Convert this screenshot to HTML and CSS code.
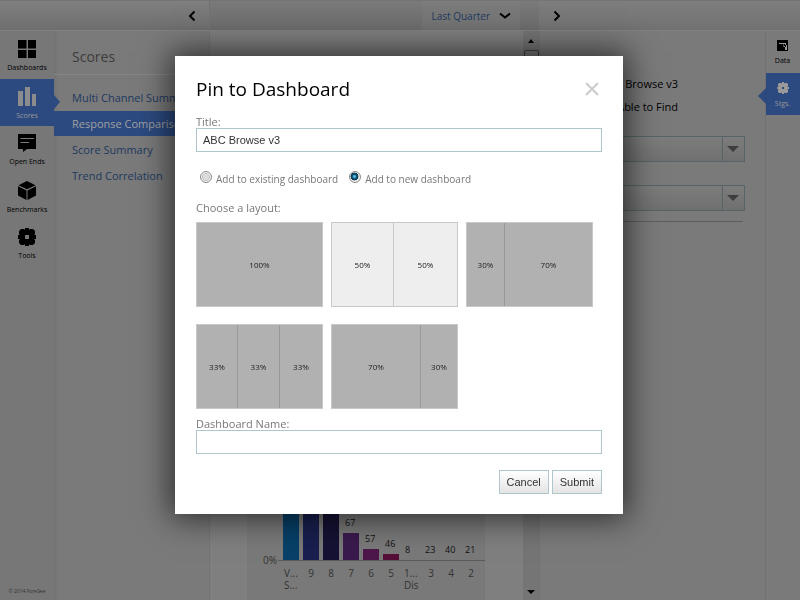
FILE: index.html
```html
<!DOCTYPE html>
<html lang="en">
<head>
<meta charset="utf-8">
<title>Pin to Dashboard</title>
<link rel="stylesheet" href="styles.css">
</head>
<body>
<div class="app">
  <header class="topbar">
    <div class="topbar-nav"><button class="icon-button" aria-label="Collapse navigation"><svg width="8" height="12" viewBox="0 0 8 12"><path d="M6.5 1.5 2 6l4.500 4.500" fill="none" stroke="#000" stroke-width="2"/></svg></button></div>
    <div class="topbar-main"><button class="period">Last Quarter <svg width="12" height="8" viewBox="0 0 12 8"><path d="M1 1.500 6 5.500l5-4" fill="none" stroke="#000" stroke-width="2"/></svg></button></div>
    <div class="topbar-settings"><button class="icon-button" aria-label="Collapse settings"><svg width="8" height="12" viewBox="0 0 8 12"><path d="M1.500 1.500 6 6l-4.500 4.500" fill="none" stroke="#000" stroke-width="2"/></svg></button></div>
  </header>
  <nav class="rail">
    <a class="rail-item" href="#"><svg width="18" height="18" viewBox="0 0 18 18"><path d="M0 0h8.500v8.500H0zM10 0h8v8.500h-8zM0 10h8.500v8H0zM10 10h8v8h-8z"/></svg>Dashboards</a>
    <a class="rail-item active" href="#"><svg width="18" height="19" viewBox="0 0 18 19"><path d="M0 4h5v15H0zM7 0h5v19H7zM14 7h4v12h-4z"/></svg>Scores</a>
    <a class="rail-item" href="#"><svg width="18" height="18" viewBox="0 0 18 18"><path d="M0 0h18v15H9l-4 3v-3H0z"/><path d="M2.500 4.500H16M2.500 8.500H11" stroke="#7a7a7a" stroke-width="1"/></svg>Open Ends</a>
    <a class="rail-item" href="#"><svg width="18" height="19" viewBox="0 0 18 19"><path d="M9 0l8.500 4.200L9 8.300.500 4.200zM0 5.200l8.500 4.200V19L0 14.500zM18 5.200 9.500 9.400V19l8.500-4.500z"/></svg>Benchmarks</a>
    <a class="rail-item" href="#"><svg width="18" height="18" viewBox="0 0 18 18"><path fill-rule="evenodd" d="M3 1h3l1 1V0h4v2l1-1h3l2 2v3l-1 1h2v4h-2l1 1v3l-2 2h-3l-1-1v2H7v-2l-1 1H3l-2-2v-3l1-1H0V7h2L1 6V3zM7 7v4h4V7z"/></svg>Tools</a>
    <small class="copyright">© 2014 ForeSee</small>
  </nav>
  <section class="submenu">
    <h2>Scores</h2>
    <ul>
      <li><a href="#">Multi Channel Summary</a></li>
      <li class="active"><a href="#">Response Comparison</a></li>
      <li><a href="#">Score Summary</a></li>
      <li><a href="#">Trend Correlation</a></li>
    </ul>
  </section>
  <main class="report">
    <div class="chart">
      <div class="zero">0%</div>
      <div class="plot">
        <div class="bars">
          <div class="column"><i class="bar" style="height:120px;background:#074068"></i></div>
          <div class="column"><i class="bar" style="height:110px;background:#191f4e"></i></div>
          <div class="column"><i class="bar" style="height:90px;background:#151233"></i></div>
          <div class="column">67<i class="bar" style="height:27px;background:#3a1a4e"></i></div>
          <div class="column">57<i class="bar" style="height:11px;background:#4e174c"></i></div>
          <div class="column">46<i class="bar" style="height:6px;background:#560f38"></i></div>
          <div class="column">8</div>
          <div class="column">23</div>
          <div class="column">40</div>
          <div class="column">21</div>
        </div>
        <div class="ticks">
          <span class="pair"><b>V...</b><b>S...</b></span><span>9</span><span>8</span><span>7</span><span>6</span><span>5</span><span class="pair"><b>1...</b><b>Dis</b></span><span>3</span><span>4</span><span>2</span>
        </div>
      </div>
    </div>
    <div class="scrollbar">
      <svg width="6" height="4" viewBox="0 0 6 4"><path d="M3 0l3 4H0z"/></svg>
      <span class="thumb"></span>
      <svg width="8" height="4" viewBox="0 0 8 4"><path d="M4 4 0 0h8z"/></svg>
    </div>
  </main>
  <section class="settings">
    <p>ABC Browse v3</p>
    <p>Able to Find</p>
    <div class="picker"><select aria-label="Measure"><option></option></select></div>
    <div class="picker"><select aria-label="Segment"><option></option></select></div>
    <hr>
  </section>
  <nav class="tools">
    <a class="tool" href="#"><svg width="11" height="11" viewBox="0 0 11 11"><path d="M0 0h11v11H0z"/><path d="M2 3h7v2H8V4H6.500v3H9V5h1v5H8V6H6V4H2z" fill="#999"/></svg>Data</a>
    <a class="tool active" href="#"><svg width="12" height="12" viewBox="0 0 12 12"><path fill-rule="evenodd" d="M2 1h2l1 .500V0h2v1.500L8 1h2l1 1v2l-.500 1H12v2h-1.500l.500 1v2l-1 1H8l-1-.500V12H5v-1.500L4 11H2l-1-1V8l.500-1H0V5h1.500L1 4V2zM5 5v2h2V5z"/></svg>Stgs.</a>
  </nav>
</div>
<div class="overlay">
  <form class="dialog" role="dialog" aria-labelledby="dialog-title">
    <header class="dialog-head">
      <h1 id="dialog-title">Pin to Dashboard</h1>
      <button type="button" class="close" aria-label="Close"><svg width="14" height="14" viewBox="0 0 14 14"><path d="M1 1l12 12M13 1 1 13" stroke="#ccc" stroke-width="2"/></svg></button>
    </header>
    <label class="field">Title:<input type="text" value="ABC Browse v3"></label>
    <div class="choices">
      <label><input type="radio" name="target">Add to existing dashboard</label>
      <label><input type="radio" name="target" checked>Add to new dashboard</label>
    </div>
    <p class="prompt">Choose a layout:</p>
    <div class="layouts">
      <button type="button" class="layout whole"><span>100%</span></button>
      <button type="button" class="layout halves selected"><span>50%</span><span>50%</span></button>
      <button type="button" class="layout narrow-wide"><span>30%</span><span>70%</span></button>
      <button type="button" class="layout thirds"><span>33%</span><span>33%</span><span>33%</span></button>
      <button type="button" class="layout wide-narrow"><span>70%</span><span>30%</span></button>
    </div>
    <label class="field">Dashboard Name:<input type="text"></label>
    <footer class="actions"><button type="button">Cancel</button><button type="submit">Submit</button></footer>
  </form>
</div>
</body>
</html>
```
FILE: styles.css
```css
* { box-sizing: border-box; }
body {
  margin: 0;
  overflow: hidden;
  font: 11px/12px "Open Sans", sans-serif;
  color: #777;
}
button { font: inherit; padding: 0; border: 0; background: none; }
a { color: inherit; text-decoration: none; }
h1, h2, p, ul { margin: 0; padding: 0; font-weight: 400; }
svg { display: block; }

.app {
  display: grid;
  grid-template-columns: 54px 156px 1fr 226px 35px;
  grid-template-rows: 31px 1fr;
  height: 100vh;
  background: #7a7a7a;
}

.topbar {
  grid-column: 1 / -1;
  display: grid;
  grid-template-columns: 210px 1fr 261px;
  border-top: 1px solid #747474;
  border-bottom: 1px solid #828282;
  background: linear-gradient(#7a7a7a, #6b6b6b);
}
.topbar > div { display: flex; align-items: center; }
.topbar-nav { justify-content: flex-end; padding-right: 13px; border-right: 1px solid #727272; background: linear-gradient(#7f7f7f, #6e6e6e); }
.topbar-main { justify-content: flex-end; padding-right: 19px; }
.topbar-settings { padding-left: 14px; background: linear-gradient(#7e7e7e, #717171); }
.period {
  display: flex;
  align-items: center;
  gap: 9px;
  height: 100%;
  padding: 0 9px;
  background: linear-gradient(#7d7d7d, #707070);
  font-size: 10px;
  color: #21395f;
}

.rail { display: flex; flex-direction: column; padding-top: 1px; background: #777; }
.rail-item {
  position: relative;
  display: flex;
  flex-direction: column;
  align-items: center;
  gap: 5px;
  height: 47px;
  padding-top: 8px;
  font-size: 7px;
  line-height: 10px;
  color: #000;
}
.rail-item.active { background: #2c4a80; color: #999; fill: #8c8c8c; }
.rail-item.active::after {
  content: "";
  position: absolute;
  top: 16px;
  left: 54px;
  border: 7px solid transparent;
  border-left: 6px solid #2c4a80;
  border-right: 0;
}
.copyright { margin: auto 0 3px; text-align: center; font-size: 5px; color: #333; }

.submenu { overflow: hidden; border-right: 1px solid #747474; background: linear-gradient(90deg, #727272, #7a7a7a 4px); }
.submenu h2 {
  height: 44px;
  padding-left: 18px;
  border-bottom: 1px solid #868686;
  font-size: 14px;
  line-height: 52px;
  color: #3c3c3c;
}
.submenu ul { display: grid; gap: 1px; padding-top: 10px; list-style: none; }
.submenu li { height: 25px; padding-left: 18px; line-height: 25px; white-space: nowrap; color: #21395f; }
.submenu .active { background: #2c4a80; color: #a0a0a0; }

.report { display: flex; align-items: flex-end; min-width: 0; background: #7f7f7f; }
.chart {
  display: flex;
  flex: 1;
  align-self: stretch;
  align-items: flex-end;
  margin: 80px 38px 0 37px;
  background: #797979;
  font-size: 10px;
  line-height: 10px;
}
.zero { width: 31px; padding: 0 1px 35px 0; text-align: right; color: #333; }
.plot { flex: 1; }
.bars { display: flex; align-items: flex-end; gap: 4px; padding-left: 5px; border-bottom: 1px solid #5c5c5c; }
.column { width: 16px; padding-left: 2px; padding-bottom: 5px; font-size: 9px; color: #111; }
.column:has(.bar) { padding-bottom: 0; }
.bar { display: block; margin: 5px 0 0 -2px; }
.ticks { display: flex; gap: 4px; height: 39px; padding: 7px 0 0 5px; color: #333; }
.ticks span { width: 16px; text-align: center; }
.ticks .pair { display: grid; align-content: start; gap: 2px; padding-left: 1px; text-align: left; }
.pair b { font-weight: 400; line-height: 10px; }
.scrollbar {
  display: flex;
  flex-direction: column;
  align-items: center;
  align-self: stretch;
  width: 16px;
  padding: 8px 0 6px;
  background: #757575;
}
.thumb { width: 15px; height: 240px; margin: 7px 0 auto; border: 1px solid #404040; border-radius: 2px; background: #777; }

.settings { padding: 45px 20px 0 18px; border-left: 1px solid #737373; color: #000; }
.settings p { margin-right: 67px; line-height: 15px; text-align: right; }
.settings p + p { margin-top: 8px; margin-bottom: 22px; }
.picker { position: relative; height: 26px; margin-bottom: 23px; }
.picker select {
  appearance: none;
  width: 100%;
  height: 100%;
  border: 1px solid #566467;
  border-radius: 0;
  background: linear-gradient(#7c7c7c, #707070);
}
.picker::before { content: ""; position: absolute; inset: 0 22px 0 auto; width: 1px; background: #566467; }
.picker::after {
  content: "";
  position: absolute;
  top: 10px;
  right: 6px;
  border: 6px solid transparent;
  border-top-color: #3d3d3d;
  border-bottom: 0;
}
.settings hr { margin: -13px 2px 0 0; border: 0; border-top: 1px solid #5e5e5e; }

.tools { border-left: 1px solid #717171; background: #7a7a7a; }
.tool {
  position: relative;
  display: flex;
  flex-direction: column;
  align-items: center;
  gap: 5px;
  height: 42px;
  padding: 9px 1px 0 0;
  font-size: 7px;
  line-height: 10px;
  color: #000;
}
.tool.active { background: #2c4a80; color: #999; fill: #999; }
.tool.active::before {
  content: "";
  position: absolute;
  top: 15px;
  left: -8px;
  border: 8px solid transparent;
  border-right-color: #2c4a80;
  border-left: 0;
}

.overlay { position: fixed; inset: 0; display: flex; justify-content: center; align-items: flex-start; padding: 56px 2px 0 0; }
.dialog { width: 448px; padding: 21px 21px 20px; background: #fff; box-shadow: 0 0 30px 4px rgba(0, 0, 0, .65); }
.dialog-head { display: flex; justify-content: space-between; align-items: center; height: 24px; margin-bottom: 15px; padding-right: 3px; }
.dialog h1 { font-size: 19px; line-height: 24px; color: #000; }
.field { display: block; }
.field input {
  display: block;
  width: 100%;
  height: 24px;
  padding: 0 6px;
  border: 1px solid #b0c6cf;
  font: 11px "Liberation Sans", sans-serif;
  color: #333;
}
.choices { display: flex; gap: 11px; margin: 18px 0 14px; padding-left: 4px; }
.choices label { display: flex; gap: 4px; font-size: 10px; line-height: 18px; }
.choices input {
  appearance: none;
  width: 12px;
  height: 12px;
  margin: 1px 0 0;
  border: 1px solid #8a8a8a;
  border-radius: 50%;
  background: radial-gradient(#ddd 40%, #bbb 52%, #f4f4f4 58%);
}
.choices input:checked { background: radial-gradient(circle at 45% 45%, #5ac0ea 10%, #0a5278 28%, #133448 48%, #eee 54%); }
.prompt { margin-bottom: 8px; }
.layouts { display: grid; grid-template-columns: repeat(3, 127px); gap: 17px 8px; margin-bottom: 9px; }
.layout { display: grid; height: 85px; border: 1px solid #c8c8c8; background: #b1b1b1; font-size: 8px; color: #222; }
.layout span { display: flex; align-items: center; justify-content: center; }
.layout span + span { border-left: 1px solid #999; }
.selected { background: #eee; }
.selected span + span { border-left-color: #c8c8c8; }
.halves { grid-template-columns: 61px 1fr; }
.narrow-wide { grid-template-columns: 37px 1fr; }
.thirds { grid-template-columns: 40px 42px 1fr; }
.wide-narrow { grid-template-columns: 88px 1fr; }
.actions { display: flex; justify-content: flex-end; gap: 3px; margin-top: 16px; }
.actions button {
  height: 24px;
  padding: 0 7px;
  border: 1px solid #b0c6cf;
  background: linear-gradient(#fff, #e4e4e4);
  font: 11px "Liberation Sans", sans-serif;
  color: #333;
}
```
